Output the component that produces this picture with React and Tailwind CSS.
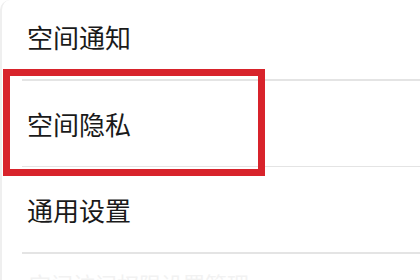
const rows = ["空间通知", "空间隐私", "通用设置"];

export default function App() {
  return (
    <div
      className="w-[420px] h-[280px] overflow-hidden bg-white border-l-2 border-[#efefef] rounded-tl-[10px]"
      style={{ fontFamily: '"Noto Sans CJK SC", "Noto Sans", sans-serif' }}
    >
      <div className="-mt-[6px]">
        {rows.map((label, i) => (
          <div key={label} className="relative">
            <div className="h-[85px] flex items-center pl-[25px] text-[26px] text-[#1a1a1a]">
              {label}
            </div>
            <div className="ml-[20px] h-[1.5px] bg-[#e4e4e4]" />
            {i === 1 && (
              <div className="absolute left-[1px] -top-[12px] w-[262px] h-[107px] border-[7px] border-[#d8232b]" />
            )}
          </div>
        ))}
        <div className="pl-[27px] pt-[18px] text-[22px] text-[#f2f2f2] leading-none">
          空间访问权限设置管理
        </div>
      </div>
    </div>
  );
}
